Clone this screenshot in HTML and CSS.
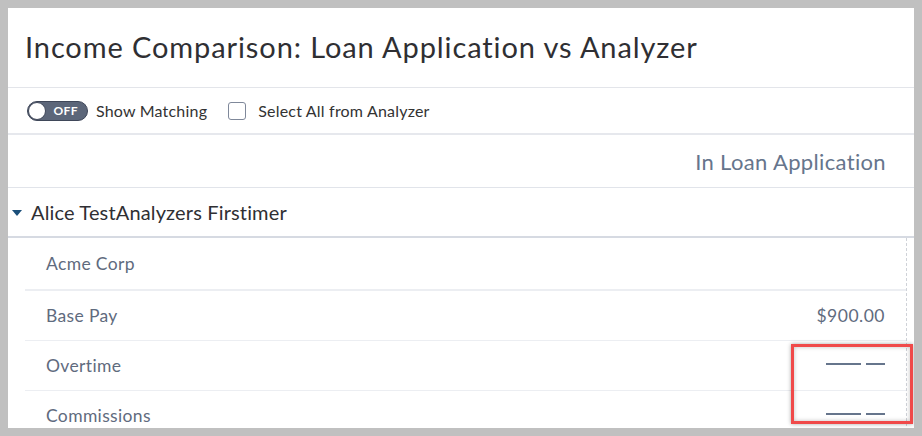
FILE: index.html
```html
<!DOCTYPE html>
<html>
<head>
<meta charset="utf-8">
<link rel="stylesheet" href="styles.css">
</head>
<body>
<div class="panel">
  <div class="title">Income Comparison: Loan Application vs Analyzer</div>
  <div class="toolbar">
    <span class="toggle"><span class="knob"></span><span class="toggle-text">OFF</span></span>
    <span class="label">Show Matching</span>
    <span class="checkbox"></span>
    <span class="label">Select All from Analyzer</span>
  </div>
  <div class="colhead">In Loan Application</div>
  <div class="group"><span class="caret"></span><span class="group-name">Alice TestAnalyzers Firstimer</span></div>
  <div class="rows">
    <div class="row row-employer"><span class="row-label">Acme Corp</span><span class="row-value"></span></div>
    <div class="row"><span class="row-label">Base Pay</span><span class="row-value">$900.00</span></div>
    <div class="row"><span class="row-label">Overtime</span><span class="row-value dashes" title="—— —"><span class="dash long"></span><span class="dash short"></span></span></div>
    <div class="row"><span class="row-label">Commissions</span><span class="row-value dashes" title="—— —"><span class="dash long"></span><span class="dash short"></span></span></div>
  </div>
  <div class="highlight"></div>
</div>
</body>
</html>
```
FILE: styles.css
```css
html, body {
  margin: 0;
  padding: 0;
}
body {
  background: #c0c0c0;
  padding: 8px;
  font-family: Lato, "Liberation Sans", sans-serif;
}
.panel {
  position: relative;
  background: #fff;
  width: 906px;
  height: 420px;
  overflow: hidden;
}
.title {
  height: 80px;
  box-sizing: border-box;
  border-bottom: 1px solid #e3e5ea;
  padding-left: 17px;
  display: flex;
  align-items: center;
  font-size: 29px;
  letter-spacing: 0.9px;
  color: #2f2f33;
  padding-bottom: 2px;
}
.toolbar {
  height: 47px;
  box-sizing: border-box;
  border-bottom: 2px solid #e6e8ed;
  display: flex;
  align-items: center;
  padding-left: 19px;
}
.toggle {
  position: relative;
  width: 61px;
  height: 20px;
  box-sizing: border-box;
  border-radius: 10px;
  background: #5c6679;
  border: 1px solid #3f4759;
  display: flex;
  align-items: center;
  justify-content: flex-end;
  padding-right: 9px;
}
.knob {
  position: absolute;
  left: 0;
  top: 0;
  width: 18px;
  height: 18px;
  border-radius: 50%;
  background: #fff;
  box-sizing: border-box;
  border: 1px solid #3f4759;
}
.toggle-text {
  color: #fff;
  font-size: 12px;
  font-weight: bold;
  letter-spacing: 0.4px;
}
.label {
  font-size: 16px;
  letter-spacing: 0.2px;
  color: #333;
  margin-left: 8px;
}
.checkbox {
  width: 18px;
  height: 18px;
  box-sizing: border-box;
  border: 1px solid #7f889a;
  border-radius: 3px;
  margin-left: 21px;
  margin-right: 4px;
}
.colhead {
  height: 53px;
  box-sizing: border-box;
  border-bottom: 1px solid #e1e4ea;
  display: flex;
  align-items: center;
  justify-content: flex-end;
  padding-right: 28px;
  font-size: 22px;
  letter-spacing: 0.35px;
  color: #66758c;
}
.group {
  height: 50px;
  box-sizing: border-box;
  border-bottom: 2px solid #d6dae2;
  display: flex;
  align-items: center;
  padding-left: 4px;
}
.caret {
  width: 0;
  height: 0;
  border-left: 5px solid transparent;
  border-right: 5px solid transparent;
  border-top: 6px solid #1b4f7a;
  margin-right: 9px;
  margin-top: 2px;
}
.group-name {
  font-size: 20px;
  letter-spacing: 0.15px;
  color: #2f2f33;
}
.rows {
  margin-left: 17px;
  margin-right: 7px;
  border-right: 1px dashed #cfd2d8;
}
.row {
  height: 50px;
  box-sizing: border-box;
  border-bottom: 1px solid #eceef2;
  display: flex;
  align-items: center;
  justify-content: space-between;
  padding-left: 21px;
  padding-right: 21px;
  font-size: 17.5px;
  letter-spacing: 0.35px;
  color: #5f6b7e;
}
.row-employer {
  height: 53px;
  border-bottom: 2px solid #eceef2;
}
.row-value {
  color: #5f6b7e;
  letter-spacing: 0.5px;
}
.dashes {
  display: flex;
  align-items: center;
  gap: 5px;
  margin-top: -3px;
}
.dash {
  display: block;
  height: 2px;
  background: #66758c;
}
.dash.long {
  width: 35px;
}
.dash.short {
  width: 19px;
}
.highlight {
  position: absolute;
  left: 783px;
  top: 336px;
  width: 122px;
  height: 80px;
  box-sizing: border-box;
  border: 3px solid #f04a4a;
  box-shadow: 0 0 4px rgba(0,0,0,0.35), inset 0 0 4px rgba(0,0,0,0.25);
}
```
